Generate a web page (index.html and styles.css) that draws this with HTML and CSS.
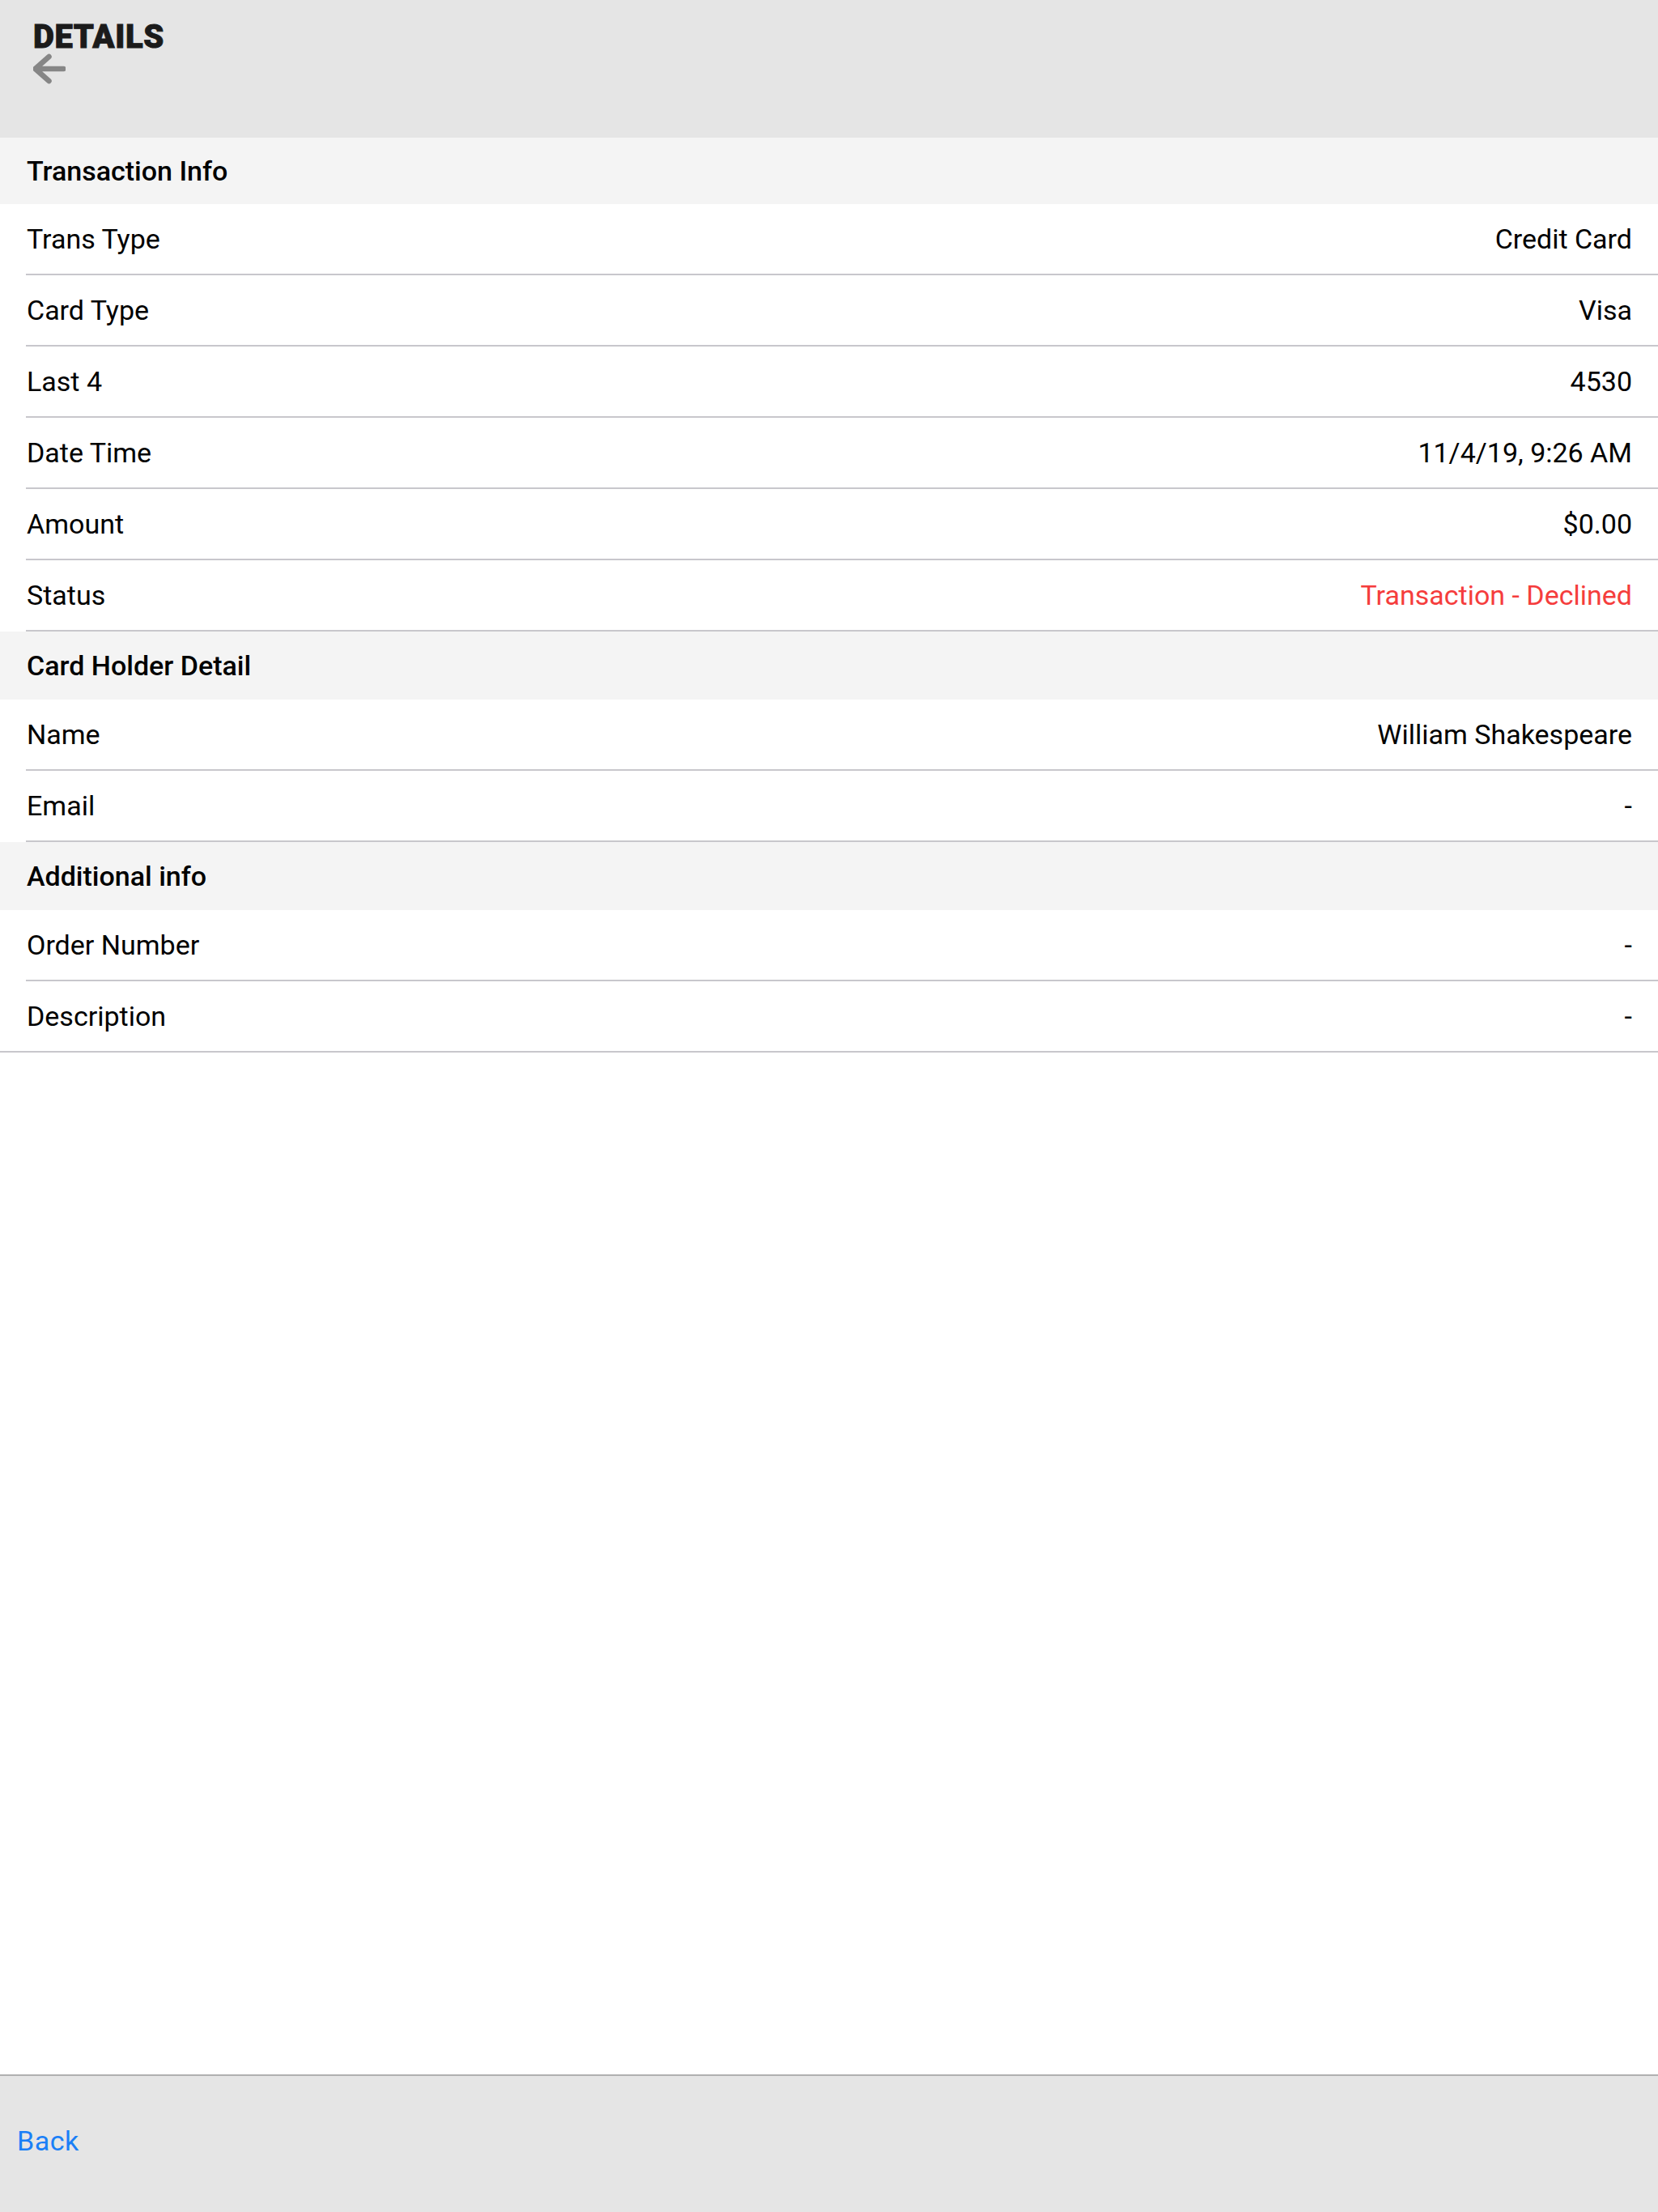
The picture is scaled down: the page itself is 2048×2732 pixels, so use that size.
FILE: index.html
```html
<!DOCTYPE html>
<html lang="en">
<head>
<meta charset="utf-8">
<title>Details</title>
<link rel="stylesheet" href="styles.css">
</head>
<body>
<div class="app">
  <header class="toolbar">
    <h1 class="title">DETAILS</h1>
    <button class="back-icon" aria-label="Back">
      <svg width="40" height="40" viewBox="0 0 40 40">
        <path d="M2.5 19 H37.5 M19.5 4 L2.5 19 L19.5 34" fill="none" stroke="#868686" stroke-width="6.5" stroke-linecap="round" stroke-linejoin="round"/>
      </svg>
    </button>
  </header>

  <main class="content">
    <div class="section-title section-first">Transaction Info</div>
    <div class="row"><div class="row-inner"><span class="label">Trans Type</span><span class="value">Credit Card</span></div></div>
    <div class="row"><div class="row-inner"><span class="label">Card Type</span><span class="value">Visa</span></div></div>
    <div class="row"><div class="row-inner"><span class="label">Last 4</span><span class="value">4530</span></div></div>
    <div class="row"><div class="row-inner"><span class="label">Date Time</span><span class="value">11/4/19, 9:26 AM</span></div></div>
    <div class="row"><div class="row-inner"><span class="label">Amount</span><span class="value">$0.00</span></div></div>
    <div class="row"><div class="row-inner"><span class="label">Status</span><span class="value declined">Transaction - Declined</span></div></div>

    <div class="section-title">Card Holder Detail</div>
    <div class="row"><div class="row-inner"><span class="label">Name</span><span class="value">William Shakespeare</span></div></div>
    <div class="row"><div class="row-inner"><span class="label">Email</span><span class="value">-</span></div></div>

    <div class="section-title">Additional info</div>
    <div class="row"><div class="row-inner"><span class="label">Order Number</span><span class="value">-</span></div></div>
    <div class="row row-last"><div class="row-inner"><span class="label">Description</span><span class="value">-</span></div></div>
  </main>

  <footer class="footer">
    <a class="back-link" href="#">Back</a>
  </footer>
</div>
</body>
</html>
```

FILE: styles.css
```css
html, body {
  margin: 0;
  padding: 0;
}

body {
  font-family: Roboto, "Liberation Sans", sans-serif;
  color: #000;
  background: #fff;
}

.app {
  display: flex;
  flex-direction: column;
  height: 2732px;
}

.toolbar {
  height: 170px;
  box-sizing: border-box;
  background: #e5e5e5;
  padding: 26px 0 0 41px;
  flex: 0 0 auto;
}

.title {
  margin: 0;
  font-family: Roboto, "Liberation Sans", sans-serif;
  font-weight: 900;
  font-size: 40px;
  line-height: 40px;
  color: #1b1b1b;
  letter-spacing: 0.6px;
  -webkit-text-stroke: 0.9px #1b1b1b;
}

.back-icon {
  display: block;
  margin: 0;
  padding: 0;
  border: 0;
  background: none;
  width: 40px;
  height: 40px;
}

.back-icon svg {
  display: block;
}

.content {
  flex: 1 1 auto;
}

.section-title {
  height: 84px;
  box-sizing: border-box;
  background: #f4f4f4;
  padding-left: 33px;
  display: flex;
  align-items: center;
  font-size: 34px;
  font-weight: 500;
}

.section-first {
  height: 82px;
}

.row {
  padding-left: 32px;
  background: #fff;
}

.row-inner {
  height: 88px;
  box-sizing: border-box;
  border-bottom: 2px solid #c8c7cc;
  padding-right: 32px;
  display: flex;
  align-items: center;
  justify-content: space-between;
  font-size: 34px;
}

.label {
  padding-left: 1px;
}

.value.declined {
  color: #f53d3d;
}

.row-last {
  padding-left: 0;
  border-bottom: 2px solid #c8c7cc;
}

.row-last .row-inner {
  border-bottom: 0;
  height: 86px;
  padding-left: 32px;
}

.footer {
  flex: 0 0 170px;
  box-sizing: border-box;
  background: #e5e5e5;
  border-top: 2px solid #b0b0b0;
  display: flex;
  align-items: center;
  padding: 0 0 8px 21px;
}

.back-link {
  color: #1a7ff7;
  text-decoration: none;
  font-size: 34px;
  letter-spacing: 0.5px;
}
```
